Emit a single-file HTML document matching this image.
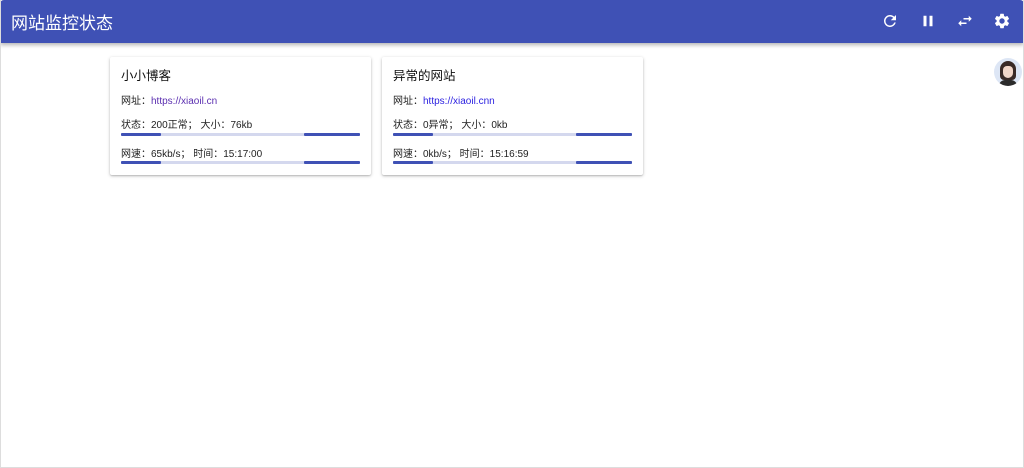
<!DOCTYPE html>
<html><head><meta charset="utf-8"><style>
*{box-sizing:border-box;margin:0;padding:0}
body{width:1024px;height:468px;background:#fff;font-family:"Liberation Sans","Noto Sans CJK SC",sans-serif;position:relative;overflow:hidden}
.frame{position:absolute;left:0;top:0;width:1024px;height:468px;border:1px solid #ddd;border-top:none;pointer-events:none}
.hdr{position:absolute;left:0;top:0;width:1024px;height:43px;background:#3f51b5;border-radius:4px 4px 0 0;box-shadow:0 2px 4px rgba(0,0,0,.3);color:#fff}
.hdr .t{position:absolute;left:11px;top:9px;font-size:17px}
.hdr svg{position:absolute;top:12px;width:18px;height:18px;fill:#fff}
.card{position:absolute;top:57px;width:261px;height:118px;background:#fff;border-radius:2px;box-shadow:0 1px 3px rgba(0,0,0,.25),0 1px 1px rgba(0,0,0,.1);font-size:10px;color:#222}
.card .h{position:absolute;left:11px;top:8px;font-size:12.5px;color:#111}
.card .r{position:absolute;left:11px}
.card a{color:#5b2fb0;text-decoration:none}
.bar{position:absolute;left:11px;width:239px;height:3px;background:#d4d8ee;border-radius:1px}
.bar i{position:absolute;top:0;height:3px;background:#3f51b5;border-radius:1px}
.av{position:absolute;left:994px;top:58px;width:28px;height:28px;border-radius:50%;background:#dde6f5;overflow:hidden}
.av .hair{position:absolute;left:6px;top:3px;width:16px;height:19px;background:#3a2a26;border-radius:8px 8px 4px 4px}
.av .face{position:absolute;left:9px;top:8px;width:10px;height:12px;background:#f2d6c8;border-radius:4px 4px 5px 5px}
.av .body{position:absolute;left:5px;top:22px;width:18px;height:8px;background:#2b2b2b;border-radius:6px 6px 0 0}
</style></head><body>
<div class="hdr"><div class="t">网站监控状态</div>
<svg style="left:881px" viewBox="0 0 24 24"><path d="M17.65 6.35A7.96 7.96 0 0 0 12 4a8 8 0 1 0 7.73 10h-2.08A6 6 0 1 1 12 6c1.66 0 3.14.69 4.22 1.78L13 11h7V4l-2.35 2.35z"/></svg>
<svg style="left:919px" viewBox="0 0 24 24"><path d="M6 19h4V5H6v14zm8-14v14h4V5h-4z"/></svg>
<svg style="left:956px" viewBox="0 0 24 24"><path d="M6.99 11L3 15l3.99 4v-3H14v-2H6.99v-3zM21 9l-3.99-4v3H10v2h7.01v3L21 9z"/></svg>
<svg style="left:993px" viewBox="0 0 24 24"><path d="M19.14 12.94c.04-.3.06-.61.06-.94s-.02-.64-.07-.94l2.030-1.58a.49.49 0 0 0 .12-.61l-1.92-3.32a.49.49 0 0 0-.59-.22l-2.39.96c-.5-.38-1.03-.7-1.620-.94l-.36-2.54a.48.48 0 0 0-.48-.41h-3.84c-.24 0-.43.17-.47.41l-.36 2.54c-.59.24-1.13.57-1.62.94l-2.39-.96a.48.48 0 0 0-.59.22L2.74 8.87c-.12.21-.08.47.12.61l2.03 1.58c-.05.3-.09.63-.09.94s.02.64.07.94l-2.03 1.58a.49.49 0 0 0-.12.61l1.92 3.32c.12.22.37.29.59.22l2.39-.96c.5.38 1.03.7 1.62.94l.36 2.54c.05.24.24.41.48.41h3.840c.24 0 .44-.17.47-.41l.36-2.54c.59-.24 1.13-.56 1.62-.94l2.39.96c.22.08.47 0 .59-.22l1.92-3.32c.12-.22.07-.47-.12-.61l-2.01-1.58zM12 15.6A3.6 3.6 0 1 1 12 8.4a3.6 3.6 0 0 1 0 7.2z"/></svg>
</div>
<div class="card" style="left:110px">
<div class="h">小小博客</div>
<div class="r" style="top:35px">网址：<a>https://xiaoil.cn</a></div>
<div class="r" style="top:59px">状态：200正常；&nbsp;大小：76kb</div>
<div class="bar" style="top:76px"><i style="left:0;width:40px"></i><i style="left:183px;width:56px"></i></div>
<div class="r" style="top:88px">网速：65kb/s；&nbsp;时间：15:17:00</div>
<div class="bar" style="top:104px"><i style="left:0;width:40px"></i><i style="left:183px;width:56px"></i></div>
</div>
<div class="card" style="left:382px">
<div class="h">异常的网站</div>
<div class="r" style="top:35px">网址：<a style="color:#2a1fe0">https://xiaoil.cnn</a></div>
<div class="r" style="top:59px">状态：0异常；&nbsp;大小：0kb</div>
<div class="bar" style="top:76px"><i style="left:0;width:40px"></i><i style="left:183px;width:56px"></i></div>
<div class="r" style="top:88px">网速：0kb/s；&nbsp;时间：15:16:59</div>
<div class="bar" style="top:104px"><i style="left:0;width:40px"></i><i style="left:183px;width:56px"></i></div>
</div>
<div class="av"><div class="hair"></div><div class="face"></div><div class="body"></div></div>
<div class="frame"></div>
</body></html>
